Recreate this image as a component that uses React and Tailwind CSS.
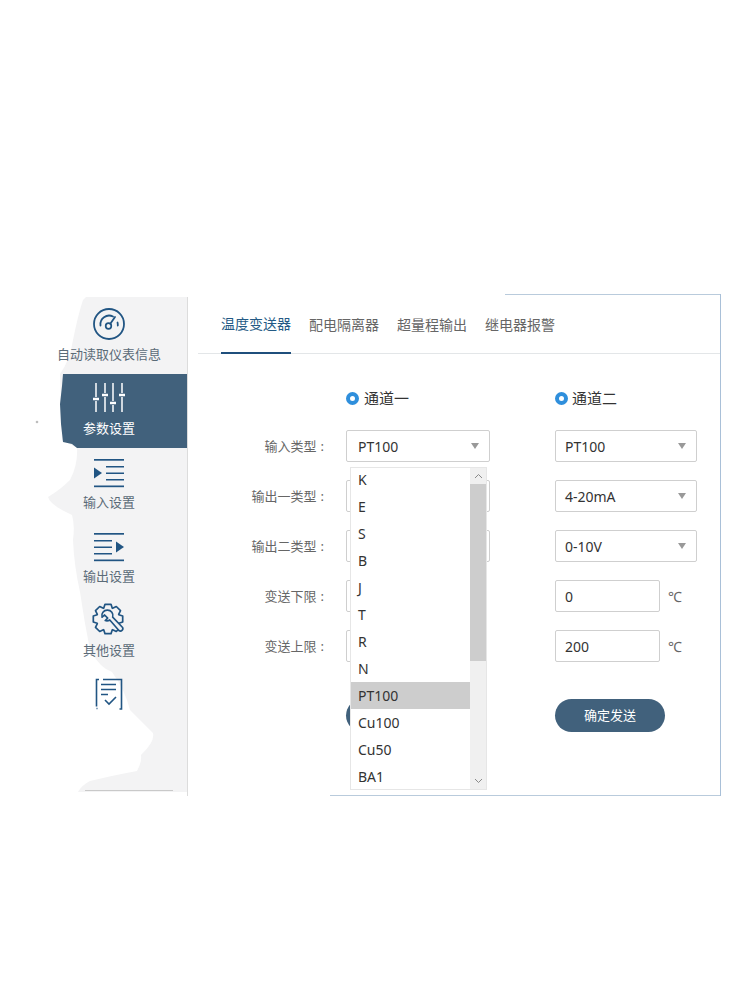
import { useMemo } from 'react';

const ICON = '#215583';

function GaugeIcon() {
  return (
    <svg width="32" height="32" viewBox="0 0 32 32" fill="none" stroke={ICON} strokeWidth="1.8" strokeLinecap="round">
      <circle cx="16" cy="16" r="15" />
      <path d="M7.5 17.5a8.7 8.7 0 0 1 12.5-9" />
      <path d="M24.5 14.5a8.7 8.7 0 0 1 .3 3" />
      <circle cx="15.5" cy="18" r="2.8" strokeWidth="1.7" />
      <path d="M17.3 15.8 22 9" />
    </svg>
  );
}

function SlidersIcon() {
  return (
    <svg width="34" height="32" viewBox="0 0 34 32" fill="none" stroke="#fff" strokeWidth="1.5">
      <path d="M4 1v14M4 19v11M13 1v10M13 15v15M21 1v18M21 23v7M30 1v10M30 15v15" />
      <path d="M1 17h6M10 13h6M18 21h6M27 13h6" strokeWidth="2.6" />
    </svg>
  );
}

function IndentIcon() {
  return (
    <svg width="32" height="32" viewBox="0 0 32 32" fill={ICON} stroke="none">
      <rect x="1" y="3" width="30" height="1.7" />
      <rect x="13" y="10" width="18" height="1.5" />
      <rect x="13" y="16.500" width="18" height="1.5" />
      <rect x="13" y="23" width="18" height="1.5" />
      <rect x="1" y="29.500" width="30" height="1.7" />
      <path d="M1 11.500 9 17l-8 5.500z" />
    </svg>
  );
}

function OutdentIcon() {
  return (
    <svg width="32" height="32" viewBox="0 0 32 32" fill={ICON} stroke="none">
      <rect x="1" y="3" width="30" height="1.7" />
      <rect x="1" y="10" width="18" height="1.5" />
      <rect x="1" y="16.500" width="18" height="1.5" />
      <rect x="1" y="23" width="18" height="1.5" />
      <rect x="1" y="29.500" width="30" height="1.7" />
      <path d="M23 11.500 31 17l-8 5.500z" />
    </svg>
  );
}

function GearIcon() {
  // 8 toothed outline, easier to generate than to type out
  const gear = useMemo(() => {
    const pts = [];
    for (let i = 0; i < 8; i++) {
      const a = (i * Math.PI) / 4 - Math.PI / 2;
      [[-0.38, 11.6], [-0.2, 15], [0.2, 15], [0.38, 11.6]].forEach(([da, r]) => {
        pts.push(`${(16 + r * Math.cos(a + da)).toFixed(1)} ${(16 + r * Math.sin(a + da)).toFixed(1)}`);
      });
    }
    return `M${pts.join('L')}Z`;
  }, []);

  return (
    <svg width="34" height="34" viewBox="0 0 34 34" fill="none" stroke={ICON} strokeWidth="1.7" strokeLinejoin="round">
      <path d={gear} fill="#f3f3f4" />
      <path
        d="M15 8.500a5.600 5.600 0 0 0-5.600 7.200l.1.2 2.600-2.400 3.200 3.300-2.600 2.500a5.600 5.600 0 0 0 4.800-.6l9.500 11a2.500 2.500 0 0 0 3.600-3.400L20.500 15.800A5.600 5.600 0 0 0 15 8.500z"
        fill="#f3f3f4"
        transform="translate(1 -1) scale(.96)"
      />
    </svg>
  );
}

function ClipboardIcon() {
  return (
    <svg width="30" height="34" viewBox="0 0 30 34" fill="none" stroke={ICON} strokeWidth="1.6">
      <path d="M5 2.500H2.500v27M9 2.500h18.500v29.500h-2M2.500 31.500h1" />
      <path d="M7 7.500h15M7 12.500h15M7 17.500h7" />
      <path d="m11 23 4 4 7-7" />
    </svg>
  );
}

const navItems = [
  { label: '自动读取仪表信息', icon: <GaugeIcon /> },
  { label: '参数设置', icon: <SlidersIcon />, active: true },
  { label: '输入设置', icon: <IndentIcon /> },
  { label: '输出设置', icon: <OutdentIcon /> },
  { label: '其他设置', icon: <GearIcon /> },
  { icon: <ClipboardIcon /> },
];

const tabs = ['温度变送器', '配电隔离器', '超量程输出', '继电器报警'];
const options = ['K', 'E', 'S', 'B', 'J', 'T', 'R', 'N', 'PT100', 'Cu100', 'Cu50', 'BA1'];

function Sidebar() {
  return (
    <aside className="relative w-[128px] shrink-0 h-[499px] mt-[3px] pt-[3px] border-r border-[#dcdcdc]">
      {/* torn looking grey backdrop, it is a cut-out in the picture */}
      <svg className="absolute left-[-30px] top-0" width="157" height="499" viewBox="30 297 157 499">
        <path
          fill="#f3f3f4"
          d="M86 297H187V792H78Q82 785 90 781Q115 775 137 771Q142 762 141 755Q155 742 153 733Q140 720 130 710Q125 690 112 672Q100 668 90 650Q84 620 80 592Q74 565 73 540Q75 525 72 515Q50 505 48 497Q60 490 70 480Q78 465 77 448L62 440L60 374Q70 360 73 340Q78 315 83 300Z"
        />
        <circle cx="37" cy="422" r="1.300" fill="#bdbdbd" />
      </svg>
      <nav className="relative flex flex-col">
        {navItems.map((item, i) => (
          <div
            key={i}
            className={
              item.active
                ? 'h-[74px] w-[127px] bg-[#41617c] text-white [clip-path:polygon(3px_0,100%_0,100%_100%,17px_100%,12px_70px,3px_68px,1px_50px,0_30px,2px_12px)]'
                : 'h-[74px] w-[127px] text-[#5b6b78]'
            }
          >
            <div className="w-[98px] pt-2 flex flex-col items-center">
              <div className="h-8 flex items-center justify-center">{item.icon}</div>
              {item.label && (
                <span className="mt-1.5 h-4 text-[13px] leading-4 whitespace-nowrap">{item.label}</span>
              )}
            </div>
          </div>
        ))}
      </nav>
      <div className="absolute left-[25px] top-[493px] w-[88px] h-px bg-[#c9c9c9]" />
    </aside>
  );
}

function Select({ value, wide }) {
  return (
    <div className={wide
      ? 'h-8 w-[144px] flex items-center justify-between pl-[11px] pr-[10px] bg-white border border-[#cfcfcf] rounded-[2px]'
      : 'h-8 w-[142px] flex items-center justify-between pl-[9px] pr-[10px] bg-white border border-[#cfcfcf] rounded-[2px]'}
    >
      <span className="pt-px text-sm text-[#333]">{value}</span>
      <span className="w-0 h-0 border-x-4 border-x-transparent border-t-[6px] border-t-[#999]" />
    </div>
  );
}

function TempInput({ value }) {
  return (
    <div className="flex items-center">
      <div className="h-8 w-[105px] flex items-center pl-[9px] pt-px bg-white border border-[#cfcfcf] rounded-[2px] text-sm text-[#333]">
        {value}
      </div>
      {value && <span className="ml-2 pt-px text-sm text-[#666]">℃</span>}
    </div>
  );
}

function Row({ label, left, right }) {
  return (
    <div className="flex items-center h-8 mb-[18px]">
      <label className="w-[138px] pt-px pr-[2px] text-right text-[13px] text-[#666]">
        {label}<span className="ml-[4px]">:</span>
      </label>
      <div className="ml-5 w-[144px]">{left}</div>
      <div className="ml-[65px]">{right}</div>
    </div>
  );
}

function Radio({ label, tight }) {
  return (
    <div className={tight ? 'flex items-center gap-1 h-5' : 'flex items-center gap-[5px] h-5'}>
      <span className="w-[13px] h-[13px] rounded-full border-[4px] border-[#2f8fdc] bg-white" />
      <span className="text-[15px] text-[#333]">{label}</span>
    </div>
  );
}

function Dropdown() {
  return (
    <div className="absolute left-[162px] top-[173px] w-[137px] h-[323px] flex overflow-hidden bg-white border border-[#e6e6e6]">
      <ul className="w-[119px] -mt-[2px]">
        {options.map((o) => (
          <li
            key={o}
            className={`h-[27px] leading-[27px] pl-[7px] text-sm text-[#333] ${o === 'PT100' ? 'bg-[#cdcdcd]' : ''}`}
          >
            {o}
          </li>
        ))}
      </ul>
      <div className="flex-1 flex flex-col bg-[#f0f0f0]">
        <div className="h-[16px] flex items-center justify-center">
          <svg width="9" height="6" viewBox="0 0 9 6" fill="none" stroke="#8a8a8a"><path d="m1 5 3.500-3.500L8 5" /></svg>
        </div>
        <div className="h-[177px] bg-[#cdcdcd]" />
        <div className="flex-1" />
        <div className="h-[16px] flex items-center justify-center">
          <svg width="9" height="6" viewBox="0 0 9 6" fill="none" stroke="#8a8a8a"><path d="m1 1 3.500 3.500L8 1" /></svg>
        </div>
      </div>
    </div>
  );
}

export default function App() {
  return (
    <div
      className="w-[750px] h-[1000px] bg-white pt-[294px] pl-[60px] flex items-start"
      style={{ fontFamily: '"Noto Sans", "Noto Sans CJK SC", sans-serif' }}
    >
      <Sidebar />

      <main className="relative w-[533px] h-[502px] flex flex-col border-r border-[#a9c0d8]">
        <div className="ml-[317px] h-px bg-[#b9cbdc]" />

        <div className="ml-[10px] pl-[23px] h-[59px] flex gap-[18px] border-b border-[#e3e6e8]">
          {tabs.map((t, i) => (
            <div
              key={t}
              className={
                i === 0
                  ? 'h-[59px] flex items-center text-sm text-[#245a85] border-b-2 border-[#1f4f7c]'
                  : 'h-[59px] flex items-center text-sm text-[#666]'
              }
            >
              {t}
            </div>
          ))}
        </div>

        <div className="pt-[34px]">
          <div className="flex h-5 mb-[22px]">
            <div className="ml-[158px] w-[144px]"><Radio label="通道一" /></div>
            <div className="ml-[65px]"><Radio label="通道二" tight /></div>
          </div>

          {/* channel one values sit behind the open list */}
          <Row label="输入类型" left={<Select value="PT100" wide />} right={<Select value="PT100" />} />
          <Row label="输出一类型" left={<Select wide />} right={<Select value="4-20mA" />} />
          <Row label="输出二类型" left={<Select wide />} right={<Select value="0-10V" />} />
          <Row label="变送下限" left={<TempInput />} right={<TempInput value="0" />} />
          <Row label="变送上限" left={<TempInput />} right={<TempInput value="200" />} />

          <div className="flex pt-[19px]">
            <div className="ml-[158px] w-[144px]">
              <div className="w-[110px] h-[33px] rounded-full bg-[#41617c]" />
            </div>
            <div className="ml-[65px]">
              <button className="w-[110px] h-[33px] rounded-full bg-[#41617c] text-white text-[13px]">确定发送</button>
            </div>
          </div>
        </div>

        <Dropdown />

        <div className="mt-auto ml-[142px] h-px bg-[#b9cbdc]" />
      </main>
    </div>
  );
}
